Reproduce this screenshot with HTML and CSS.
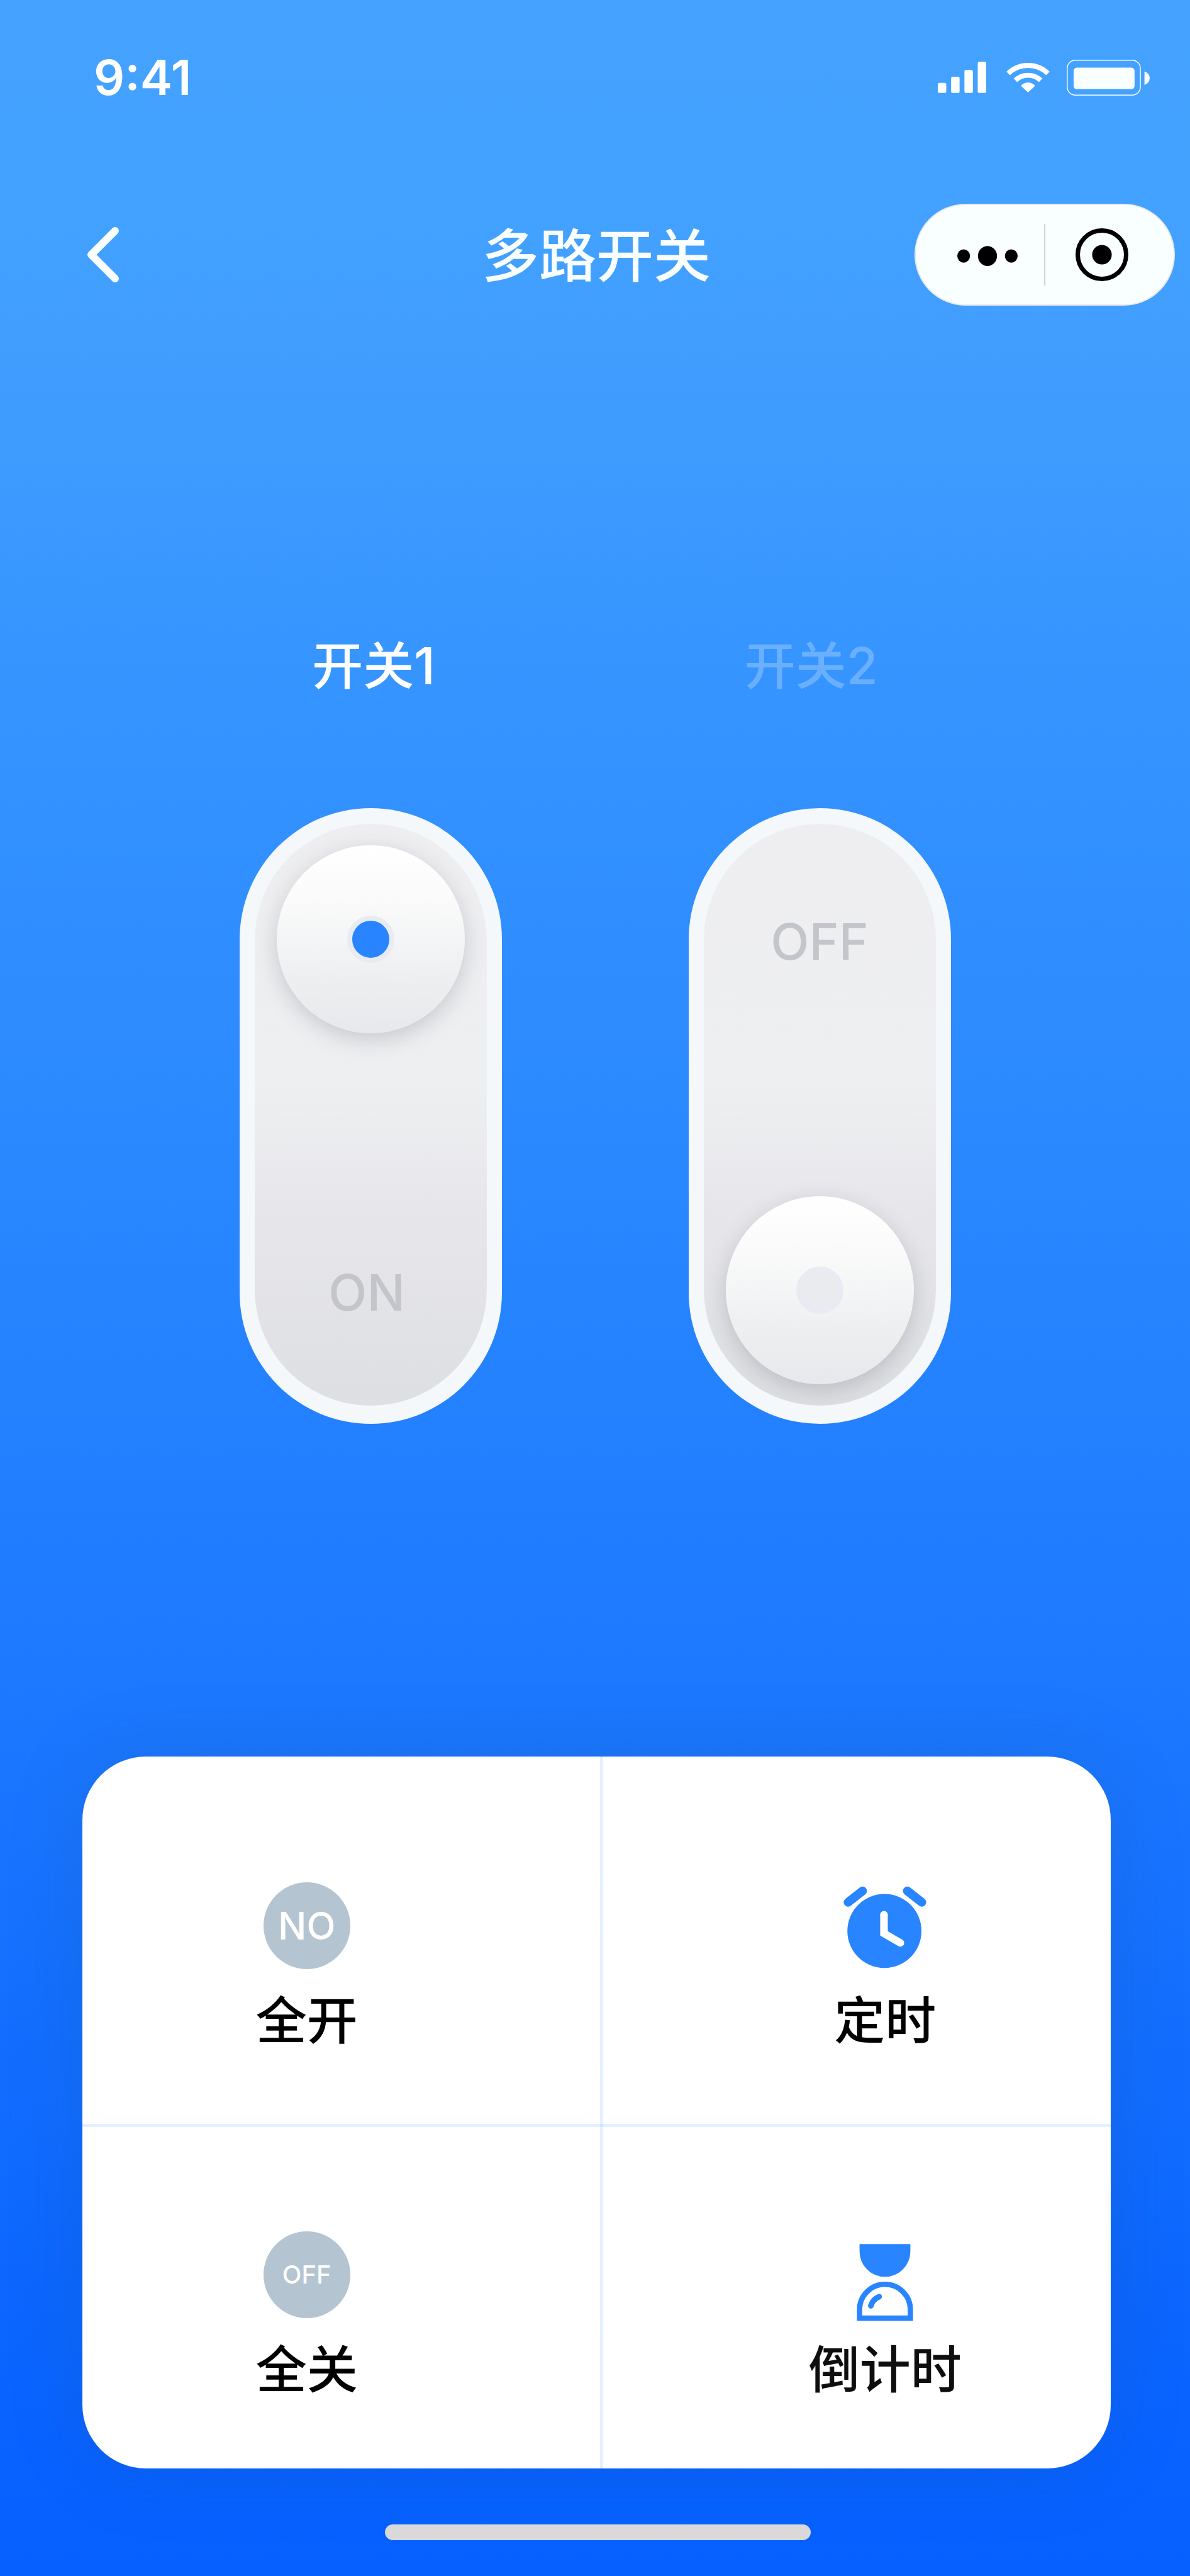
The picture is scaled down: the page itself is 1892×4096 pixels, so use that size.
FILE: index.html
```html
<!DOCTYPE html>
<html lang="zh-CN">
<head>
  <meta charset="utf-8">
  <meta name="viewport" content="width=device-width, initial-scale=1">
  <title>多路开关</title>
  <link rel="stylesheet" href="styles.css">
</head>
<body>
  <div class="screen">
    <div class="status-bar">
      <time class="clock">9:41</time>
      <div class="status-icons">
        <svg class="signal" viewBox="324 146 240 155" aria-hidden="true">
          <rect x="324" y="251" width="42" height="50" rx="8"/>
          <rect x="390" y="220" width="42" height="81" rx="8"/>
          <rect x="456" y="187" width="42" height="114" rx="8"/>
          <rect x="522" y="146" width="42" height="155" rx="8"/>
        </svg>
        <svg class="wifi" viewBox="662 154 214 146" aria-hidden="true">
          <path class="arc" d="M671 206A141 141 0 0 1 867 206"/>
          <path class="arc" d="M706.500 240A90.600 90.600 0 0 1 831.500 240"/>
          <path d="M734 267A46 46 0 0 1 804 267L769 300Z"/>
        </svg>
        <svg class="battery" viewBox="959 139 410 177" aria-hidden="true">
          <rect class="case" x="961.500" y="141.500" width="361" height="172" rx="40"/>
          <rect x="993" y="178" width="301" height="106" rx="16"/>
          <path d="M1343 197A34 34 0 0 1 1343 263Z"/>
        </svg>
      </div>
    </div>

    <header class="nav-bar">
      <div class="nav-start">
        <button class="back" type="button" aria-label="返回">
          <svg viewBox="0 0 50 88" aria-hidden="true"><path d="M44 6L6 44L44 82"/></svg>
        </button>
      </div>
      <h1 class="title">多路开关</h1>
      <div class="nav-end">
        <div class="capsule">
          <button class="capsule-button" type="button" aria-label="更多">
            <svg class="dots" viewBox="418 1054 298 99" aria-hidden="true">
              <ellipse cx="449.500" cy="1110" rx="31.500" ry="33"/>
              <ellipse cx="567" cy="1110" rx="47" ry="49.500"/>
              <ellipse cx="684.500" cy="1110" rx="31.500" ry="33"/>
            </svg>
          </button>
          <button class="capsule-button" type="button" aria-label="关闭">
            <svg class="target" viewBox="0 0 262 262" aria-hidden="true">
              <circle class="ring" cx="131" cy="131" r="120"/>
              <circle cx="131" cy="131" r="48.500"/>
            </svg>
          </button>
        </div>
      </div>
    </header>

    <main class="content">
      <section class="switches">
        <div class="switch-names">
          <label class="switch-name" for="switch-1">开关1</label>
          <label class="switch-name is-off" for="switch-2">开关2</label>
        </div>
        <div class="switch-row">
          <div class="switch">
            <input class="switch-input" id="switch-1" type="checkbox" role="switch" checked>
            <div class="track">
              <div class="knob"><span class="lamp is-lit"></span></div>
              <span class="state state-on">ON</span>
            </div>
          </div>
          <div class="switch">
            <input class="switch-input" id="switch-2" type="checkbox" role="switch">
            <div class="track">
              <span class="state">OFF</span>
              <div class="knob"><span class="lamp"></span></div>
            </div>
          </div>
        </div>
      </section>

      <section class="actions">
        <button class="action action-start" type="button">
          <span class="badge">NO</span>
          <span class="action-name">全开</span>
        </button>
        <button class="action action-end" type="button">
          <svg class="action-icon" viewBox="426 240 492 492" aria-hidden="true">
            <path class="bell" d="M463 353L545 289M799 289L881 353"/>
            <circle cx="669" cy="516" r="210"/>
            <path class="hands" d="M666.500 423.500V529.500L759.500 583.500"/>
            <path class="hand-caps" d="M666.500 423.500v1M759 583l.5.5"/>
          </svg>
          <span class="action-name">定时</span>
        </button>
        <button class="action action-start action-lower" type="button">
          <span class="badge badge-small">OFF</span>
          <span class="action-name">全关</span>
        </button>
        <button class="action action-end action-lower" type="button">
          <svg class="action-icon" viewBox="426 210 492 492" aria-hidden="true">
            <path d="M528 282H816V324A144 144 0 0 1 528 324Z"/>
            <path class="bulb" d="M528 702V654A144 144 0 0 1 816 654V702Z"/>
            <path class="shine" d="M592 632A82 82 0 0 1 639 580"/>
          </svg>
          <span class="action-name countdown">倒计时</span>
        </button>
      </section>
    </main>

    <div class="home-indicator"></div>
  </div>
</body>
</html>
```

FILE: styles.css
```css
* {
  box-sizing: border-box;
}

body {
  margin: 0;
  font-family: Inter, "Noto Sans CJK SC", sans-serif;
  font-weight: 500;
  color: #000;
}

button {
  margin: 0;
  padding: 0;
  border: 0;
  background: none;
  color: inherit;
  font: inherit;
}

svg {
  display: block;
  overflow: visible;
}

.screen {
  display: flex;
  flex-direction: column;
  min-height: 100vh;
  overflow: hidden;
  background: linear-gradient(#45a2ff 0%, #43a1ff 8%, #409dff 15%, #3796ff 24%, #2c8aff 42%, #227fff 57%, #1c78ff 66%, #0862ff 95%, #0560ff 100%);
}

/* Status bar */
.status-bar {
  display: flex;
  align-items: center;
  justify-content: space-between;
  height: 246px;
  padding: 0 64px 0 149px;
  color: #fff;
}

.clock {
  font-size: 77px;
  font-weight: 600;
  line-height: 96px;
}

.status-icons {
  display: flex;
  align-items: center;
  fill: #fff;
}

.signal {
  width: 77px;
  height: 50px;
}

.wifi {
  width: 69px;
  height: 47px;
  margin: 0 27px 0 32px;
}

.wifi .arc {
  fill: none;
  stroke: #fff;
  stroke-width: 24.5;
}

.battery {
  width: 132px;
  height: 57px;
  fill: #f9feff;
}

.battery .case {
  fill: none;
  stroke: #fff;
  stroke-width: 4.5;
}

/* Navigation bar */
.nav-bar {
  display: grid;
  grid-template-columns: 1fr auto 1fr;
  align-items: center;
  height: 318px;
}

.nav-start {
  display: flex;
  padding-left: 139px;
}

.back svg {
  width: 50px;
  height: 88px;
  fill: none;
  stroke: #f9feff;
  stroke-width: 12;
  stroke-linecap: round;
  stroke-linejoin: round;
}

.title {
  margin: 0;
  padding: 4px 0 0 4px;
  color: #f9feff;
  font-size: 91px;
  font-weight: 500;
  line-height: 108px;
}

.nav-end {
  display: flex;
  justify-content: flex-end;
  padding-right: 24px;
}

.capsule {
  display: grid;
  grid-template-columns: 1fr 1fr;
  width: 414px;
  height: 162px;
  border: 2px solid #e6e9eb;
  border-radius: 81px;
  background: linear-gradient(#d0d3d4, #d0d3d4) center / 2px 98px no-repeat #f9feff;
}

.capsule-button {
  display: flex;
  align-items: center;
  justify-content: center;
}

.capsule-button:first-child {
  padding-left: 22px;
}

.capsule-button:last-child {
  padding-right: 24px;
}

.dots {
  width: 96px;
  height: 32px;
}

.target {
  width: 84px;
  height: 84px;
}

.target .ring {
  fill: none;
  stroke: #000;
  stroke-width: 22;
}

/* Switches */
.switches {
  padding: 447px 0 529px;
}

.switch-names {
  display: flex;
  justify-content: center;
  gap: 492px;
  margin-bottom: 178px;
}

.switch-name {
  color: #fff;
  font-size: 81px;
  line-height: 96px;
}

.switch-name.is-off {
  color: rgba(255, 255, 255, 0.26);
}

.switch-row {
  display: flex;
  justify-content: center;
  gap: 297px;
}

.switch {
  position: relative;
  width: 417px;
  padding: 25px 24px 29px;
  border-radius: 209px;
  background: #f4f8fb;
}

.switch-input {
  position: absolute;
  inset: 0;
  width: 100%;
  height: 100%;
  margin: 0;
  opacity: 0;
}

.track {
  display: flex;
  flex-direction: column;
  align-items: center;
  justify-content: space-between;
  height: 925px;
  padding: 34px 0;
  overflow: hidden;
  border-radius: 185px;
  background: linear-gradient(#eeeef1 0%, #eeeff1 45%, #e7e7eb 66%, #dedfe3 100%);
}

.knob {
  display: flex;
  align-items: center;
  justify-content: center;
  width: 299px;
  height: 299px;
  border-radius: 50%;
  background: linear-gradient(#fff 0%, #fbfbfb 25%, #f4f5f6 50%, #eeeff0 70%, #e7e8ec 100%);
  box-shadow: 0 10px 34px rgba(60, 68, 84, 0.22);
}

.lamp {
  width: 75px;
  height: 75px;
  border: 8px solid #e9ebf3;
  border-radius: 50%;
  background: #e9ebef;
}

.lamp.is-lit {
  background: #2885ff;
}

.state {
  padding-top: 6px;
  color: #c4c5ca;
  font-size: 80px;
  line-height: 293px;
}

.state-on {
  padding-right: 12px;
}

/* Quick actions */
.actions {
  display: grid;
  grid-template-columns: 825fr 809fr;
  grid-template-rows: 586px 546px;
  margin: 0 126px 0 131px;
  border-radius: 101px;
  background:
    linear-gradient(rgba(40, 133, 255, 0.12), rgba(40, 133, 255, 0.12)) 50.5% 0 / 5px 100% no-repeat,
    linear-gradient(rgba(40, 133, 255, 0.12), rgba(40, 133, 255, 0.12)) 0 51.8% / 100% 5px no-repeat,
    #fff;
  box-shadow: 0 0 120px rgba(24, 80, 140, 0.2);
}

.action {
  display: flex;
  flex-direction: column;
  align-items: center;
  gap: 34px;
  padding-top: 200px;
}

.action-lower {
  padding-top: 169px;
}

.action-start {
  padding-right: 112px;
}

.action-end {
  padding-left: 92px;
}

.badge {
  width: 138px;
  height: 138px;
  border-radius: 50%;
  background: #b4c4d1;
  color: #fff;
  font-size: 60px;
  line-height: 138px;
  text-align: center;
}

.badge-small {
  font-size: 40px;
}

.action-icon {
  width: 138px;
  height: 138px;
  fill: #2885ff;
}

.action-icon .bell {
  stroke: #2885ff;
  stroke-width: 50;
  stroke-linecap: round;
}

.action-icon .hands {
  fill: none;
  stroke: #fff;
  stroke-width: 43;
}

.action-icon .hand-caps {
  stroke: #fff;
  stroke-width: 43;
  stroke-linecap: round;
}

.action-icon .bulb {
  fill: none;
  stroke: #2885ff;
  stroke-width: 30;
}

.action-icon .shine {
  fill: none;
  stroke: #2885ff;
  stroke-width: 32;
  stroke-linecap: round;
}

.action-name {
  font-size: 81px;
  line-height: 96px;
}

.countdown {
  color: #0e0e0e;
}

/* Home indicator */
.home-indicator {
  align-self: center;
  width: 677px;
  height: 25px;
  margin: 89px 0 57px 8px;
  border-radius: 13px;
  background: #d9d9d9;
}
```
